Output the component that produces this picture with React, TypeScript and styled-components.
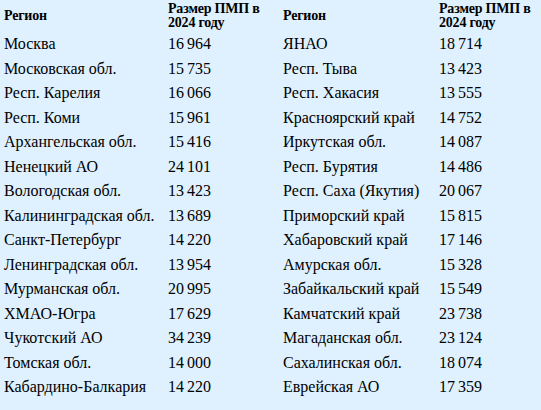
import React from 'react';
import styled, { createGlobalStyle } from 'styled-components';

const GlobalStyle = createGlobalStyle`
  html, body {
    margin: 0;
    padding: 0;
    background: #dff1fe;
  }
`;

const Sheet = styled.div`
  width: 541px;
  height: 410px;
  background: #dff1fe;
  overflow: hidden;
`;

const Table = styled.table`
  border-collapse: collapse;
  table-layout: fixed;
  width: 541px;
  font-family: "Liberation Serif", "Times New Roman", serif;
  color: #000;
`;

const Col = styled.col<{ $w: number }>`
  width: ${(p) => p.$w}px;
`;

const HeadCell = styled.th`
  font-family: "Liberation Serif", "Times New Roman", serif;
  font-size: 14px;
  font-weight: bold;
  line-height: 14px;
  text-align: left;
  vertical-align: middle;
  height: 32px;
  padding: 0 2px 0 4px;
  letter-spacing: -0.2px;
`;

const Cell = styled.td<{ $num?: boolean }>`
  font-family: "Liberation Serif", "Times New Roman", serif;
  font-size: 16px;
  line-height: 18.5px;
  padding: 3px 2px 3px 4px;
  white-space: nowrap;
  word-spacing: ${(p) => (p.$num ? '-1px' : 'normal')};
`;

const rows: [string, string, string, string][] = [
  ['Москва', '16 964', 'ЯНАО', '18 714'],
  ['Московская обл.', '15 735', 'Респ. Тыва', '13 423'],
  ['Респ. Карелия', '16 066', 'Респ. Хакасия', '13 555'],
  ['Респ. Коми', '15 961', 'Красноярский край', '14 752'],
  ['Архангельская обл.', '15 416', 'Иркутская обл.', '14 087'],
  ['Ненецкий АО', '24 101', 'Респ. Бурятия', '14 486'],
  ['Вологодская обл.', '13 423', 'Респ. Саха (Якутия)', '20 067'],
  ['Калининградская обл.', '13 689', 'Приморский край', '15 815'],
  ['Санкт-Петербург', '14 220', 'Хабаровский край', '17 146'],
  ['Ленинградская обл.', '13 954', 'Амурская обл.', '15 328'],
  ['Мурманская обл.', '20 995', 'Забайкальский край', '15 549'],
  ['ХМАО-Югра', '17 629', 'Камчатский край', '23 738'],
  ['Чукотский АО', '34 239', 'Магаданская обл.', '23 124'],
  ['Томская обл.', '14 000', 'Сахалинская обл.', '18 074'],
  ['Кабардино-Балкария', '14 220', 'Еврейская АО', '17 359'],
];

export default function App() {
  return (
    <Sheet>
      <GlobalStyle />
      <Table>
        <colgroup>
          <Col $w={164} />
          <Col $w={115} />
          <Col $w={156} />
          <Col $w={106} />
        </colgroup>
        <thead>
          <tr>
            <HeadCell>Регион</HeadCell>
            <HeadCell>Размер ПМП в 2024 году</HeadCell>
            <HeadCell>Регион</HeadCell>
            <HeadCell>Размер ПМП в 2024 году</HeadCell>
          </tr>
        </thead>
        <tbody>
          {rows.map((r) => (
            <tr key={r[0]}>
              <Cell>{r[0]}</Cell>
              <Cell $num>{r[1]}</Cell>
              <Cell>{r[2]}</Cell>
              <Cell $num>{r[3]}</Cell>
            </tr>
          ))}
        </tbody>
      </Table>
    </Sheet>
  );
}
